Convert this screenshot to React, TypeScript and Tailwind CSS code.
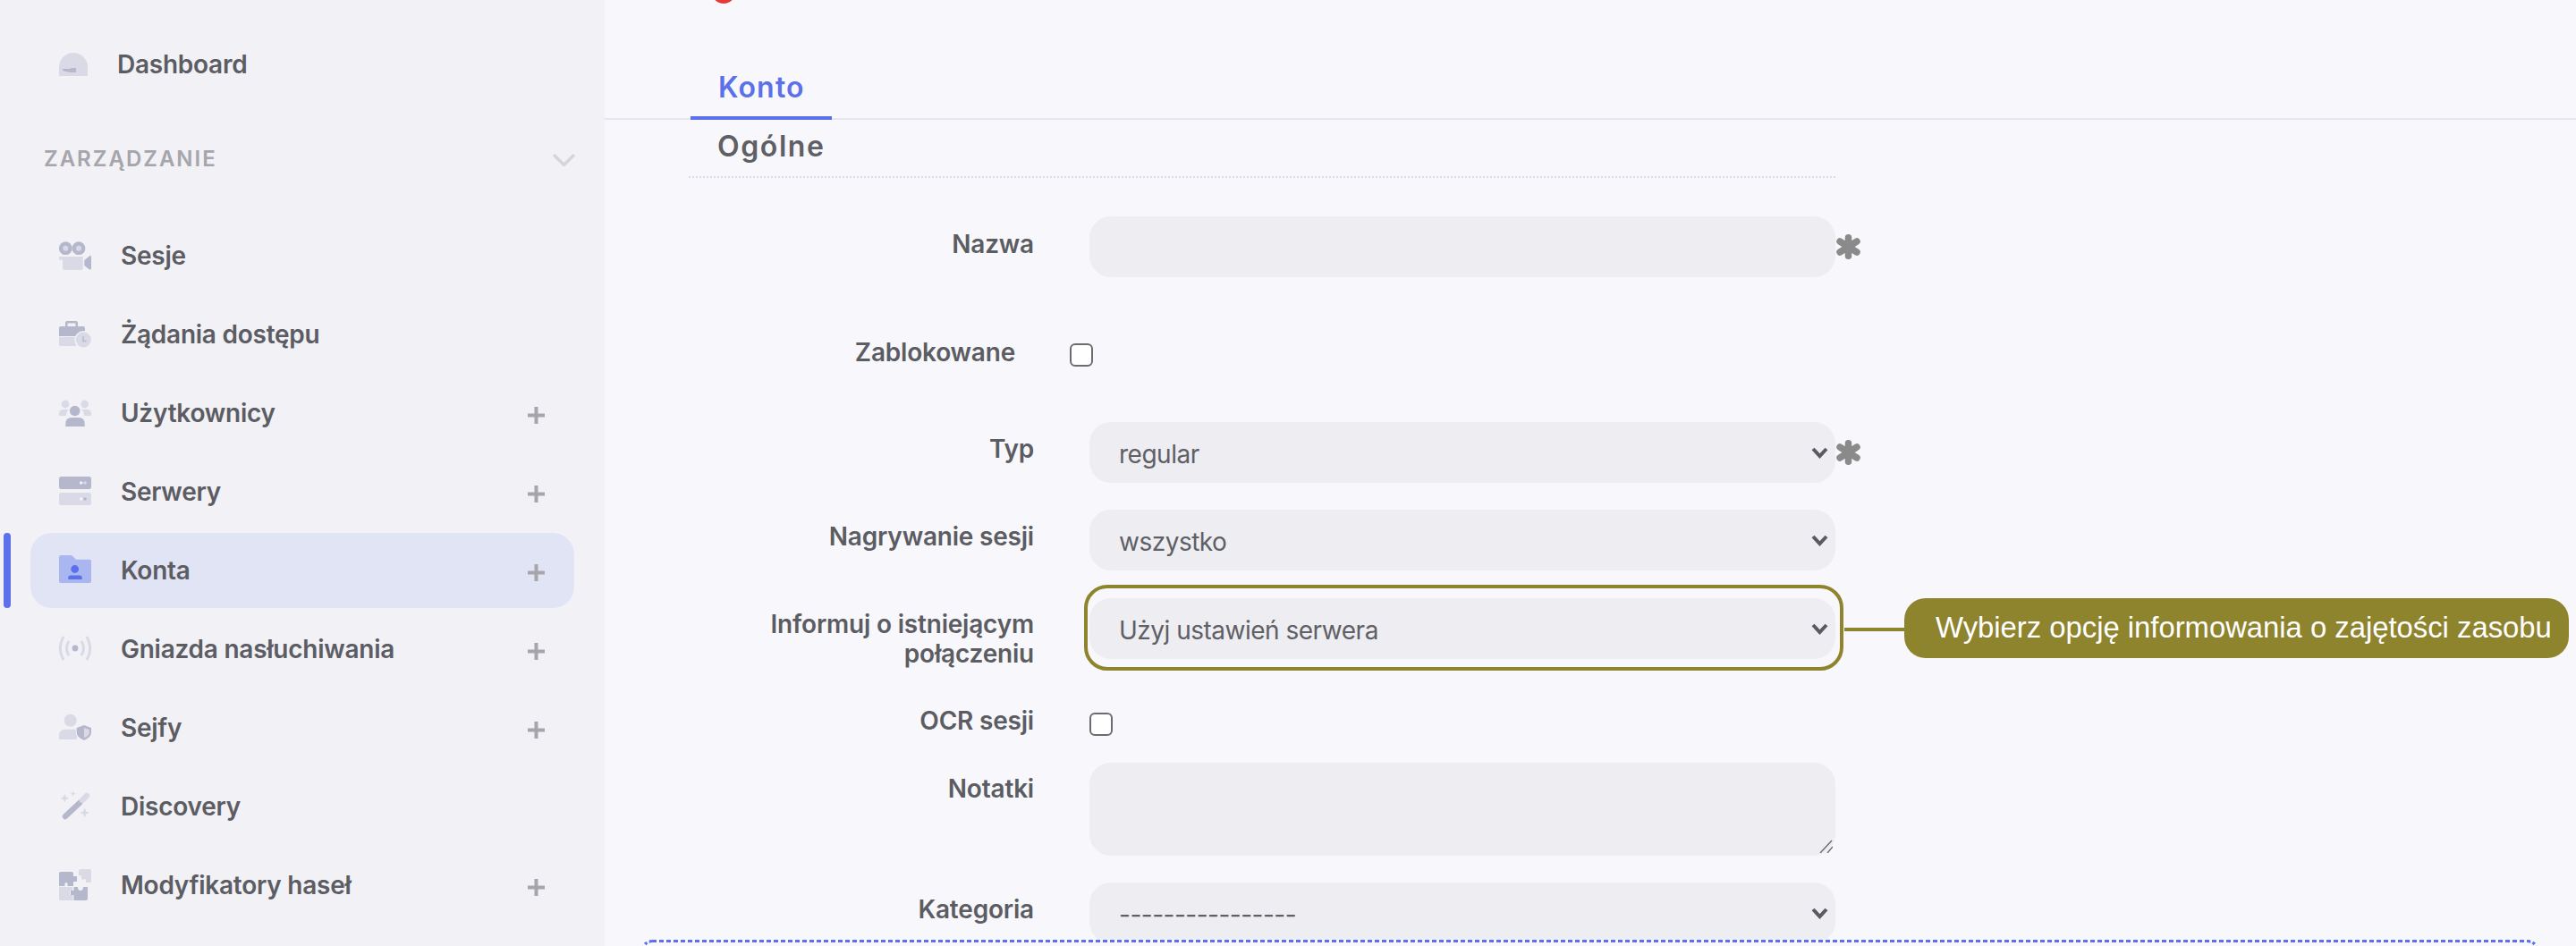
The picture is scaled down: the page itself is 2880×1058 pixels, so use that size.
import type { ReactNode } from "react";

const DARK = "#b5b8cc";
const LIGHT = "#d9dae5";

// sidebar icons, all drawn in a 36x36 box
const icons: Record<string, ReactNode> = {
  dashboard: (
    <>
      <path d="M0 31 V21 A16 16 0 0 1 32 21 V31 Z" fill={LIGHT} />
      <path d="M4 23 H13 V22 H19 V27 H13 L5 25.5 Q4 24.5 4 23 Z" fill={DARK} />
    </>
  ),
  sessions: (
    <>
      <circle cx="7.3" cy="9.7" r="7.4" fill={DARK} />
      <circle cx="22" cy="9.7" r="7.4" fill={DARK} />
      <circle cx="7.3" cy="9.7" r="3" fill={LIGHT} />
      <circle cx="22" cy="9.7" r="3" fill={LIGHT} />
      <path d="M0 19 H26.7 V32 Q26.7 34 24.7 34 H6 Q4 34 4 32 V22.5 H1 Q0 22.5 0 21.5 Z" fill={LIGHT} />
      <path d="M28.3 23 L34.5 17.9 Q36 17.5 36 19 V32 Q36 34 34 33.5 L28.3 29 Z" fill={DARK} />
    </>
  ),
  requests: (
    <>
      <path d="M7 9 V5 Q7 3 9 3 H19 Q21 3 21 5 V9 H18.5 V5.5 H9.5 V9 Z" fill={DARK} />
      <path d="M2 9 H27 Q29 9 29 11 V20 H0 V11 Q0 9 2 9 Z" fill={DARK} />
      <path d="M0 21 H19 V31 H2 Q0 31 0 29 Z" fill={LIGHT} />
      <circle cx="27.3" cy="24" r="10" fill="#f1f1f6" />
      <circle cx="27.3" cy="24" r="8.5" fill={LIGHT} />
      <path d="M27 20 V25.5 H30.5" stroke={DARK} strokeWidth="1.4" fill="none" />
    </>
  ),
  users: (
    <>
      <circle cx="7" cy="8" r="4.4" fill={LIGHT} />
      <circle cx="28.7" cy="8" r="4.4" fill={LIGHT} />
      <path d="M0 21 V19 Q0 14 5 14 H11 Q8 16 8 21 Z" fill={LIGHT} />
      <path d="M36 21 V19 Q36 14 31 14 H25 Q28 16 28 21 Z" fill={LIGHT} />
      <circle cx="17.7" cy="15.5" r="5.8" fill={DARK} />
      <path d="M7.3 33 V30 Q7.3 23 14 23 H22 Q28.7 23 28.7 30 V33 Z" fill={DARK} />
    </>
  ),
  servers: (
    <>
      <rect x="0" y="1" width="36" height="14" rx="2.5" fill={DARK} />
      <circle cx="24.7" cy="8" r="1.8" fill="#f1f1f6" />
      <circle cx="29" cy="8" r="1.8" fill={LIGHT} />
      <rect x="0" y="19" width="36" height="14" rx="2.5" fill={LIGHT} />
      <circle cx="24.7" cy="26" r="1.8" fill="#f1f1f6" />
      <circle cx="29" cy="26" r="1.8" fill={DARK} />
    </>
  ),
  accounts: (
    <>
      <path d="M2 1 H14 L19 5.7 H34 Q36 5.7 36 7.7 V30 Q36 32 34 32 H2 Q0 32 0 30 V3 Q0 1 2 1 Z" fill="#aab6f0" />
      <circle cx="17.7" cy="16.5" r="4.4" fill="#5b70ea" />
      <path d="M10.3 28 V26 Q10.3 23.6 12.7 23.6 H23.3 Q25.7 23.6 25.7 26 V28 Z" fill="#5b70ea" />
    </>
  ),
  sockets: (
    <>
      <g fill="none" stroke={LIGHT} strokeWidth="3" strokeLinecap="round">
        <path d="M4.5 5 Q-2 17 4.5 29" />
        <path d="M31.5 5 Q38 17 31.5 29" />
        <path d="M10.5 10 Q6.5 17 10.5 24" />
        <path d="M25.5 10 Q29.5 17 25.5 24" />
      </g>
      <circle cx="18" cy="17" r="3.4" fill={DARK} />
    </>
  ),
  vaults: (
    <>
      <circle cx="12.7" cy="9.7" r="7" fill={LIGHT} />
      <path d="M0 31 V27 Q0 19.7 7 19.7 H21 L19.5 31 Z" fill={LIGHT} />
      <path d="M28 14 L37 17.5 V23 Q37 29 28 33 Q18.7 29 18.7 23 V17.5 Z" fill="#f1f1f6" />
      <path d="M28 15 L36 18 V23 Q36 28.5 28 32 Q19.7 28.5 19.7 23 V18 Z" fill={DARK} />
      <path d="M28 18 L33.8 20 V23 Q33.8 27 28 29.3 Z" fill={LIGHT} />
    </>
  ),
  discovery: (
    <>
      <path d="M6.3 4 L7.8 7.2 L11 8.7 L7.8 10.2 L6.3 13.4 L4.8 10.2 L1.6 8.7 L4.8 7.2 Z" fill={LIGHT} />
      <path d="M15.7 0.6 L16.6 2.8 L18.8 3.7 L16.6 4.6 L15.7 6.8 L14.8 4.6 L12.6 3.7 L14.8 2.8 Z" fill={LIGHT} />
      <path d="M28.7 19.6 L30.2 23.5 L34.1 25 L30.2 26.5 L28.7 30.4 L27.2 26.5 L23.3 25 L27.2 23.5 Z" fill={LIGHT} />
      <path d="M7 29 L23 14" stroke={DARK} strokeWidth="6.4" strokeLinecap="round" />
      <path d="M26 11 L31 6" stroke={LIGHT} strokeWidth="6.4" strokeLinecap="round" />
    </>
  ),
  modifiers: (
    <>
      <path d="M2 3 H14 Q16 3 16 5 V8 H20 V14 H16 V19 H9.5 Q10 15 8 15 Q6 15 6.5 19 H0 V5 Q0 3 2 3 Z" fill={DARK} />
      <path d="M24 0 H34 Q36 0 36 2 V13 Q36 15 34 15 H30 V11 Q27 12 25 11 V7 H22 V2 Q22 0 24 0 Z" fill={LIGHT} />
      <path d="M0 20 H15 V24 H12 V29 H15.5 V35 H2 Q0 35 0 33 Z" fill={LIGHT} />
      <path d="M16.5 20 H21 Q21 24 24 24 Q27 24 27 20 H32 V33 Q32 35 30 35 H16.5 V29 H13 V24 H16.5 Z" fill={DARK} />
    </>
  ),
};

const navItems = [
  { key: "sessions", label: "Sesje" },
  { key: "requests", label: "Żądania dostępu" },
  { key: "users", label: "Użytkownicy", plus: true },
  { key: "servers", label: "Serwery", plus: true },
  { key: "accounts", label: "Konta", plus: true, active: true },
  { key: "sockets", label: "Gniazda nasłuchiwania", plus: true },
  { key: "vaults", label: "Sejfy", plus: true },
  { key: "discovery", label: "Discovery" },
  { key: "modifiers", label: "Modyfikatory haseł", plus: true },
];

function NavIcon({ name }: { name: string }) {
  return (
    <svg viewBox="0 0 36 36" className="w-[36px] h-[36px] shrink-0 overflow-visible">
      {icons[name]}
    </svg>
  );
}

function PlusIcon() {
  return (
    <svg viewBox="0 0 19 19" className="w-[19px] h-[19px] mt-[5px]">
      <path d="M9.5 0 V19 M0 9.5 H19" stroke="#a5a5ab" strokeWidth="4" />
    </svg>
  );
}

function Sidebar() {
  return (
    <aside className="w-[676px] shrink-0 h-full bg-[#f1f1f6] pt-[30px] text-[28px] font-semibold tracking-[-0.25px] text-[#5c5c63]">
      <div className="flex items-center h-[84px] ml-[34px] pl-[32px] gap-[29px]">
        <NavIcon name="dashboard" />
        <span className="leading-none">Dashboard</span>
      </div>

      <div className="flex items-center justify-between h-[42px] mt-[42px] pl-[49px] pr-[33px]">
        <span className="mt-[2px] text-[24px] font-semibold tracking-[2px] text-[#a5a5ab]">ZARZĄDZANIE</span>
        <svg viewBox="0 0 25 14" className="w-[25px] h-[14px] mt-[4px]" fill="none">
          <path d="M1 1 L12.5 12.5 L24 1" stroke="#d5d5da" strokeWidth="3.5" />
        </svg>
      </div>

      <nav className="mt-[46px] flex flex-col gap-[4px]">
        {navItems.map(item => (
          <div key={item.key} className="relative">
            {item.active && <div className="absolute left-[4px] top-0 w-[8px] h-[84px] rounded-full bg-[#5b70ea]" />}
            <a className={`flex items-center h-[84px] ml-[34px] w-[608px] pl-[32px] pr-[33px] rounded-[24px] ${item.active ? "bg-[#e1e4f5]" : ""}`}>
              <NavIcon name={item.key} />
              <span className="ml-[33px] flex-1 leading-none">{item.label}</span>
              {item.plus && <PlusIcon />}
            </a>
          </div>
        ))}
      </nav>
    </aside>
  );
}

function Label({ children, className = "w-[386px]" }: { children: ReactNode; className?: string }) {
  return <label className={`block shrink-0 text-right text-[28px] font-semibold tracking-[-0.2px] leading-[33px] text-[#5c5c63] ${className}`}>{children}</label>;
}

function Asterisk() {
  return (
    <svg viewBox="0 0 27 28" className="ml-[1px] w-[27px] h-[28px]" fill="none" stroke="#8a8a8a" strokeWidth="7.5" strokeLinecap="round">
      <path d="M13.5 3.8 V24.2 M4 8 L23 20 M23 8 L4 20" />
    </svg>
  );
}

function Select({ value, required }: { value: string; required?: boolean }) {
  return (
    <div className="flex items-center">
      <div className="relative w-[834px]">
        <select
          defaultValue={value}
          className="block w-full h-[68px] appearance-none rounded-[24px] bg-[#edEDf2] pl-[33px] pt-[4px] text-[28px] tracking-[-0.5px] text-[#5f5f66] font-[Inter,sans-serif] outline-none"
        >
          <option>{value}</option>
        </select>
        <svg viewBox="0 0 19 13" className="absolute right-[8px] top-[28px] w-[19px] h-[13px] pointer-events-none" fill="none">
          <path d="M2 2 L9.5 10 L17 2" stroke="#5a5a62" strokeWidth="4" />
        </svg>
      </div>
      {required && <Asterisk />}
    </div>
  );
}

function Checkbox({ className = "" }: { className?: string }) {
  return <input type="checkbox" className={`block appearance-none w-[26px] h-[26px] rounded-[6px] border-2 border-[#6b6b70] bg-white ${className}`} />;
}

function AccountForm() {
  return (
    <form className="mt-[43px] pl-[94px]">
      {/* Nazwa */}
      <div className="flex gap-[62px]">
        <Label className="w-[386px] pt-[15px]">Nazwa</Label>
        <div className="flex items-center">
          <input className="block w-[834px] h-[68px] rounded-[24px] bg-[#edEDf2] outline-none" />
          <Asterisk />
        </div>
      </div>

      {/* Zablokowane */}
      <div className="flex mt-[68px] h-[34px]">
        <Label className="w-[365px]">Zablokowane</Label>
        <Checkbox className="ml-[61px] mt-[6px]" />
      </div>

      {/* Typ */}
      <div className="flex gap-[62px] mt-[60px]">
        <Label className="w-[386px] pt-[14px]">Typ</Label>
        <Select value="regular" required />
      </div>

      {/* Nagrywanie sesji */}
      <div className="flex gap-[62px] mt-[30px]">
        <Label className="w-[386px] pt-[14px]">Nagrywanie sesji</Label>
        <Select value="wszystko" />
      </div>

      {/* Informuj, with its callout */}
      <div className="flex gap-[62px] mt-[31px] h-[81px]">
        <Label className="w-[386px] pt-[13px]">
          Informuj o istniejącym
          <br />
          połączeniu
        </Label>
        <div className="relative">
          <Select value="Użyj ustawień serwera" />
          <div className="absolute -left-[6px] -top-[15px] w-[849px] h-[96px] rounded-[26px] border-[4px] border-[#8f842e] pointer-events-none" />
          <div className="absolute left-[844px] top-[33px] w-[67px] h-[4px] bg-[#8f842e]" />
          <div className="absolute left-[911px] top-0 w-[743px] h-[67px] flex items-center pl-[35px] pb-[2px] rounded-[24px] bg-[#8f842e] text-white text-[32.8px] whitespace-nowrap font-['Liberation_Sans',sans-serif]">
            Wybierz opcję informowania o zajętości zasobu
          </div>
        </div>
      </div>

      {/* OCR sesji */}
      <div className="flex gap-[62px] mt-[40px] h-[34px]">
        <Label className="w-[386px]">OCR sesji</Label>
        <Checkbox className="mt-[7px]" />
      </div>

      {/* Notatki */}
      <div className="flex gap-[62px] mt-[29px]">
        <Label className="w-[386px] pt-[13px]">Notatki</Label>
        <div className="relative w-[834px] h-[104px]">
          <textarea className="block w-full h-full resize-none rounded-[24px] bg-[#edEDf2] outline-none" />
          <svg viewBox="0 0 15 15" className="absolute right-[3px] bottom-[3px] w-[15px] h-[15px] pointer-events-none" fill="none" stroke="#6a6a70" strokeWidth="1.4">
            <path d="M1 15 L14 1 M9 15 L15 8" />
          </svg>
        </div>
      </div>

      {/* Kategoria */}
      <div className="flex gap-[62px] mt-[30px]">
        <Label className="w-[386px] pt-[14px]">Kategoria</Label>
        <Select value="----------------" />
      </div>

      {/* top edge of the next, dashed section; the page cuts it off */}
      <div className="relative flex -ml-[53px] -mt-[4px] w-[2121px] h-[60px] bg-[#f8f8fc]">
        <div className="w-[12px] h-[12px] rounded-tl-[12px] border-l-[3px] border-t-[3px] border-dotted border-[#5b70ea]" />
        <div className="flex-1 h-[3px] bg-[repeating-linear-gradient(90deg,#5b70ea_0,#5b70ea_5px,transparent_5px,transparent_8px)]" />
        <div className="w-[12px] h-[12px] rounded-tr-[12px] border-r-[3px] border-t-[3px] border-dotted border-[#5b70ea]" />
      </div>
    </form>
  );
}

export default function App() {
  return (
    <div className="flex w-[2880px] h-[1058px] overflow-hidden bg-[#f8f8fc] font-['Inter',sans-serif]">
      <Sidebar />
      <main className="relative flex-1 h-full overflow-hidden">
        <div className="absolute left-[120px] -top-[22px] w-[26px] h-[26px] rounded-full bg-[#e53935]" />

        <div className="flex items-end h-[134px] border-b-2 border-[#e6e6ee] pl-[96px]">
          <div className="w-[158px] h-[60px] -mb-[2px] pl-[31px] border-b-4 border-[#5b70ea] text-[32px] font-semibold tracking-[1.2px] leading-[47px] text-[#5b70ea]">
            Konto
          </div>
        </div>

        <div className="ml-[126px] mt-[10px] text-[32px] font-semibold tracking-[1.6px] leading-[40px] text-[#5f5f66]">Ogólne</div>
        <div className="ml-[94px] mt-[13px] w-[1282px] border-t-2 border-dotted border-[#dcdce6]" />

        <AccountForm />
      </main>
    </div>
  );
}
